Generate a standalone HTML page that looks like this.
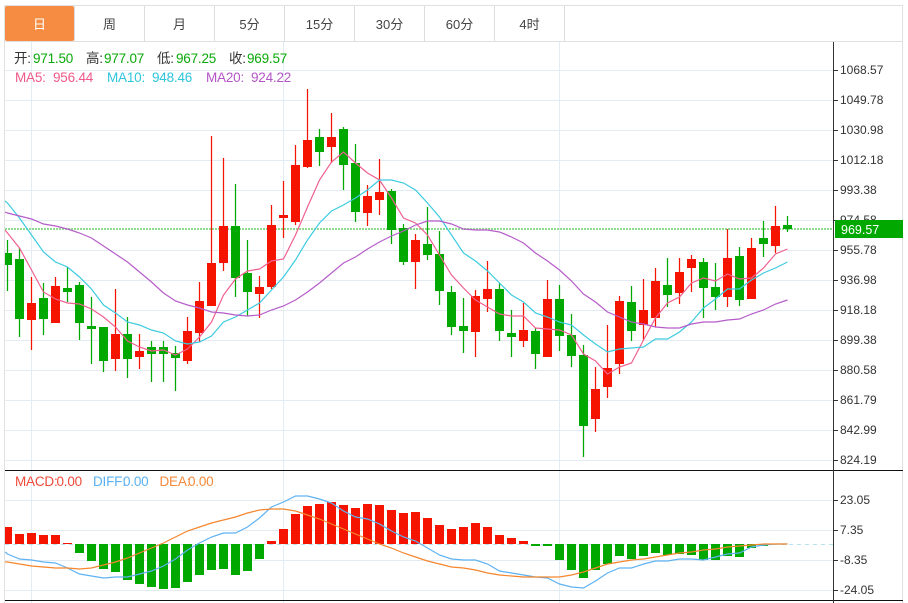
<!DOCTYPE html>
<html lang="zh">
<head>
<meta charset="utf-8">
<title>K线图</title>
<style>
html,body{margin:0;padding:0;background:#fff;width:908px;height:603px;overflow:hidden}
svg{display:block}
text{font-family:"Liberation Sans","Noto Sans CJK SC",sans-serif}
.tab{font-size:13px;fill:#444;text-anchor:middle}
.ax{font-size:12px;fill:#333}
.h{font-size:13.5px;letter-spacing:-.2px}
.k{fill:#333}
.g{fill:#0aa80a}
</style>
</head>
<body>
<svg width="908" height="603" viewBox="0 0 908 603" xmlns="http://www.w3.org/2000/svg">
<defs><clipPath id="c"><rect x="5" y="42" width="828" height="561"/></clipPath></defs>

<!-- grid -->
<path d="M5 70.5H833M5 100.5H833M5 130.5H833M5 160.5H833M5 190.5H833M5 220.5H833M5 250.5H833M5 280.5H833M5 310.5H833M5 340.5H833M5 370.5H833M5 400.5H833M5 430.5H833M5 460.5H833M5 500.5H833M5 530.5H833M5 560.5H833M5 590.5H833M31.5 42V603M283.5 42V603M559.5 42V603" stroke="#e3ecf3" stroke-width="1" fill="none"/>

<!-- frame -->
<path d="M4.5 5V603M902.5 5V603M4 5.5H903M5 41.5H903" stroke="#e0e0e0" stroke-width="1" fill="none"/>
<path d="M74.5 6V41M144.5 6V41M214.5 6V41M284.5 6V41M354.5 6V41M424.5 6V41M494.5 6V41M564.5 6V41" stroke="#dcdcdc" stroke-width="1" fill="none"/>
<rect x="5" y="6" width="69" height="35" rx="2" fill="#f58c41"/>

<!-- tabs -->
<text x="39.5" y="29" class="tab" style="fill:#fff">日</text>
<text x="109.5" y="29" class="tab">周</text>
<text x="179.5" y="29" class="tab">月</text>
<text x="249.5" y="29" class="tab">5分</text>
<text x="319.5" y="29" class="tab">15分</text>
<text x="389.5" y="29" class="tab">30分</text>
<text x="459.5" y="29" class="tab">60分</text>
<text x="529.5" y="29" class="tab">4时</text>

<g clip-path="url(#c)">
<!-- price line -->
<path d="M5 229H833" stroke="#8fdc8f" stroke-width="2" stroke-dasharray="2 1" fill="none"/>

<!-- candles -->
<g fill="none" stroke="#f51400" stroke-width="1.25">
<path d="M31.5 277V350M55.5 277V323M115.5 289V371M139.5 334V369M187.5 317V364M199.5 282V342M211.5 136V306M223.5 158V271M259.5 276V318M271.5 205V289M283.5 181V238M295.5 145V225M307.5 89V168M331.5 113V163M367.5 185V226M379.5 159V215M415.5 234V289M475.5 290V357M487.5 261V312M523.5 303V347M547.5 280V357M595.5 367V432M607.5 325V398M619.5 296V374M643.5 279V340M655.5 268V327M679.5 258V304M691.5 255V292M727.5 229V307M751.5 238V299M775.5 206V253"/>
</g>
<path fill="#f51400" d="M27 303h9v17h-9zM51 286h9v37h-9zM111 334h9v25h-9zM135 351h9v6h-9zM183 331h9v30h-9zM195 301h9v32h-9zM207 263h9v43h-9zM219 226h9v37h-9zM255 287h9v7h-9zM267 225h9v62h-9zM279 215h9v3h-9zM291 165h9v57h-9zM303 140h9v27h-9zM327 137h9v10h-9zM363 196h9v17h-9zM375 192h9v8h-9zM411 240h9v22h-9zM471 296h9v36h-9zM483 289h9v10h-9zM519 330h9v11h-9zM543 299h9v58h-9zM591 389h9v30h-9zM603 368h9v19h-9zM615 301h9v63h-9zM639 310h9v15h-9zM651 281h9v37h-9zM675 272h9v21h-9zM687 259h9v9h-9zM723 258h9v39h-9zM747 248h9v51h-9zM771 226h9v20h-9z"/>
<g fill="none" stroke="#00a800" stroke-width="1.25">
<path d="M7.5 240V291M19.5 248V337M43.5 283V335M67.5 267V302M79.5 282V340M91.5 297V364M103.5 327V372M127.5 317V378M151.5 341V382M163.5 341V382M175.5 346V391M235.5 184V297M247.5 240V316M319.5 129V166M343.5 127V190M355.5 144V222M391.5 189V244M403.5 224V265M427.5 207V260M439.5 231V305M451.5 286V335M463.5 298V353M499.5 283V341M511.5 310V357M535.5 328V369M559.5 285V351M571.5 314V367M583.5 345V457M631.5 286V341M667.5 258V307M703.5 258V318M715.5 263V310M739.5 247V306M763.5 221V257M787.5 216V232"/>
</g>
<path fill="#00a800" d="M3 253h9v12h-9zM15 259h9v60h-9zM39 298h9v21h-9zM63 288h9v4h-9zM75 285h9v38h-9zM87 326h9v3h-9zM99 327h9v34h-9zM123 334h9v25h-9zM147 347h9v7h-9zM159 347h9v7h-9zM171 353h9v5h-9zM231 226h9v52h-9zM243 273h9v19h-9zM315 137h9v15h-9zM339 129h9v36h-9zM351 163h9v49h-9zM387 191h9v39h-9zM399 228h9v34h-9zM423 244h9v11h-9zM435 254h9v37h-9zM447 292h9v35h-9zM459 326h9v5h-9zM495 289h9v42h-9zM507 333h9v4h-9zM531 331h9v23h-9zM555 299h9v37h-9zM567 335h9v21h-9zM579 355h9v71h-9zM627 302h9v29h-9zM663 285h9v10h-9zM699 262h9v26h-9zM711 287h9v10h-9zM735 256h9v44h-9zM759 238h9v6h-9zM783 225h9v4h-9z"/>

<!-- MA lines -->
<polyline fill="none" stroke="#f0608f" stroke-width="1.2" points="5,230 7.5,233 19.5,248 31.5,270 43.5,292 55.5,299 67.5,303 79.5,304 91.5,309 103.5,317 115.5,327 127.5,341 139.5,347 151.5,351 163.5,350 175.5,355 187.5,349 199.5,337 211.5,322 223.5,295 235.5,279 247.5,271 259.5,269 271.5,261 283.5,259 295.5,235 307.5,207 319.5,180 331.5,162 343.5,152 355.5,163 367.5,173 379.5,180 391.5,198 403.5,218 415.5,223 427.5,235 439.5,255 451.5,275 463.5,288 475.5,300 487.5,307 499.5,314 511.5,316 523.5,316 535.5,328 547.5,329 559.5,330 571.5,335 583.5,354 595.5,361 607.5,374 619.5,367 631.5,363 643.5,340 655.5,318 667.5,303 679.5,297 691.5,283 703.5,278 715.5,281 727.5,274 739.5,279 751.5,278 763.5,268 775.5,254 787.5,249"/>
<polyline fill="none" stroke="#3dcbe0" stroke-width="1.2" points="5,201 7.5,203 19.5,218 31.5,235 43.5,252 55.5,262 67.5,267 79.5,277 91.5,289 103.5,305 115.5,313 127.5,322 139.5,325 151.5,330 163.5,333 175.5,341 187.5,344 199.5,342 211.5,336 223.5,322 235.5,317 247.5,310 259.5,303 271.5,290 283.5,277 295.5,260 307.5,240 319.5,223 331.5,211 343.5,205 355.5,198 367.5,190 379.5,180 391.5,180 403.5,183 415.5,190 427.5,203 439.5,217 451.5,235 463.5,253 475.5,261 487.5,271 499.5,283 511.5,295 523.5,302 535.5,313 547.5,317 559.5,322 571.5,325 583.5,335 595.5,344 607.5,352 619.5,349 631.5,348 643.5,347 655.5,339 667.5,339 679.5,332 691.5,322 703.5,308 715.5,299 727.5,289 739.5,289 751.5,280 763.5,273 775.5,268 787.5,262"/>
<polyline fill="none" stroke="#b65cc9" stroke-width="1.2" points="5,212 7.5,213 19.5,216 31.5,219 43.5,224 55.5,226 67.5,229 79.5,233 91.5,238 103.5,246 115.5,254 127.5,262 139.5,272 151.5,282 163.5,293 175.5,301 187.5,305 199.5,308 211.5,312 223.5,313 235.5,315 247.5,316 259.5,315 271.5,310 283.5,306 295.5,300 307.5,292 319.5,283 331.5,273 343.5,263 355.5,257 367.5,249 379.5,242 391.5,236 403.5,231 415.5,225 427.5,221 439.5,221 451.5,224 463.5,229 475.5,230 487.5,230 499.5,232 511.5,237 523.5,243 535.5,253 547.5,261 559.5,270 571.5,281 583.5,294 595.5,302 607.5,312 619.5,317 631.5,322 643.5,324 655.5,327 667.5,328 679.5,328 691.5,324 703.5,322 715.5,322 727.5,320 739.5,319 751.5,314 763.5,310 775.5,304 787.5,300"/>

<!-- MACD -->
<path d="M5 544.5H833" stroke="#b9e2f0" stroke-width="1" stroke-dasharray="4 4" fill="none"/>
<path fill="#f51400" d="M3 527h9v17h-9zM15 534h9v10h-9zM27 533h9v11h-9zM39 535h9v9h-9zM51 535h9v9h-9zM63 543h9v1h-9zM267 541h9v3h-9zM279 529h9v15h-9zM291 514h9v30h-9zM303 506h9v38h-9zM315 504h9v40h-9zM327 502h9v42h-9zM339 505h9v39h-9zM351 508h9v36h-9zM363 504h9v40h-9zM375 505h9v39h-9zM387 510h9v34h-9zM399 513h9v31h-9zM411 512h9v32h-9zM423 518h9v26h-9zM435 525h9v19h-9zM447 529h9v15h-9zM459 527h9v17h-9zM471 523h9v21h-9zM483 527h9v17h-9zM495 535h9v9h-9zM507 538h9v6h-9zM519 541h9v3h-9z"/>
<path fill="#00a800" d="M75 544h9v9h-9zM87 544h9v17h-9zM99 544h9v25h-9zM111 544h9v28h-9zM123 544h9v36h-9zM135 544h9v40h-9zM147 544h9v43h-9zM159 544h9v45h-9zM171 544h9v44h-9zM183 544h9v38h-9zM195 544h9v31h-9zM207 544h9v26h-9zM219 544h9v25h-9zM231 544h9v31h-9zM243 544h9v27h-9zM255 544h9v15h-9zM531 544h9v2h-9zM543 544h9v2h-9zM555 544h9v16h-9zM567 544h9v26h-9zM579 544h9v34h-9zM591 544h9v26h-9zM603 544h9v20h-9zM615 544h9v12h-9zM627 544h9v15h-9zM639 544h9v12h-9zM651 544h9v9h-9zM663 544h9v11h-9zM675 544h9v10h-9zM687 544h9v11h-9zM699 544h9v16h-9zM711 544h9v16h-9zM723 544h9v12h-9zM735 544h9v13h-9zM747 544h9v4h-9zM759 544h9v2h-9z"/>
<polyline fill="none" stroke="#5fb2f2" stroke-width="1.2" points="5,552 7.5,554 19.5,559 31.5,560 43.5,562 55.5,563 67.5,568 79.5,574 91.5,576 103.5,578 115.5,577 127.5,577 139.5,574 151.5,571 163.5,566 175.5,559 187.5,550 199.5,543 211.5,537 223.5,533 235.5,533 247.5,527 259.5,518 271.5,507 283.5,502 295.5,496 307.5,496 319.5,499 331.5,503 343.5,511 355.5,517 367.5,519 379.5,524 391.5,531 403.5,537 415.5,541 427.5,548 439.5,555 451.5,559 463.5,560 475.5,560 487.5,564 499.5,571 511.5,573 523.5,575 535.5,577 547.5,578 559.5,584 571.5,587 583.5,588 595.5,581 607.5,573 619.5,568 631.5,568 643.5,564 655.5,561 667.5,561 679.5,559 691.5,559 703.5,560 715.5,557 727.5,554 739.5,553 751.5,547 763.5,545 775.5,544 787.5,544"/>
<polyline fill="none" stroke="#f5862e" stroke-width="1.2" points="5,562 7.5,562 19.5,564 31.5,566 43.5,567 55.5,568 67.5,568 79.5,569 91.5,568 103.5,565 115.5,562 127.5,558 139.5,553 151.5,548 163.5,543 175.5,537 187.5,531 199.5,527 211.5,523 223.5,520 235.5,517 247.5,513 259.5,510 271.5,509 283.5,509 295.5,511 307.5,515 319.5,519 331.5,524 343.5,529 355.5,534 367.5,539 379.5,544 391.5,548 403.5,553 415.5,557 427.5,561 439.5,564 451.5,567 463.5,568 475.5,570 487.5,573 499.5,575 511.5,576 523.5,577 535.5,577 547.5,577 559.5,577 571.5,575 583.5,572 595.5,568 607.5,564 619.5,562 631.5,560 643.5,559 655.5,557 667.5,555 679.5,553 691.5,552 703.5,550 715.5,549 727.5,547 739.5,546 751.5,545 763.5,544 775.5,544 787.5,544"/>
</g>

<!-- sub chart separators and axis -->
<path d="M5 470.5H903M5 600.5H903" stroke="#111" stroke-width="1" fill="none"/>
<path d="M833.5 42V603" stroke="#333" stroke-width="1" fill="none"/>
<path d="M833 70.5h5M833 100.5h5M833 130.5h5M833 160.5h5M833 190.5h5M833 220.5h5M833 250.5h5M833 280.5h5M833 310.5h5M833 340.5h5M833 370.5h5M833 400.5h5M833 430.5h5M833 460.5h5M833 500.5h5M833 530.5h5M833 560.5h5M833 590.5h5" stroke="#333" stroke-width="1" fill="none"/>

<!-- axis labels -->
<g class="ax">
<text x="840" y="74" class="ax">1068.57</text>
<text x="840" y="104" class="ax">1049.78</text>
<text x="840" y="134" class="ax">1030.98</text>
<text x="840" y="164" class="ax">1012.18</text>
<text x="840" y="194" class="ax">993.38</text>
<text x="840" y="224" class="ax">974.58</text>
<text x="840" y="254" class="ax">955.78</text>
<text x="840" y="284" class="ax">936.98</text>
<text x="840" y="314" class="ax">918.18</text>
<text x="840" y="344" class="ax">899.38</text>
<text x="840" y="374" class="ax">880.58</text>
<text x="840" y="404" class="ax">861.79</text>
<text x="840" y="434" class="ax">842.99</text>
<text x="840" y="464" class="ax">824.19</text>
<text x="840" y="504" class="ax">23.05</text>
<text x="840" y="534" class="ax">7.35</text>
<text x="840" y="564" class="ax">-8.35</text>
<text x="840" y="594" class="ax">-24.05</text>
</g>
<rect x="835" y="220" width="68" height="18" fill="#00a800"/>
<text x="841" y="234" style="font-size:12.5px;fill:#fff">969.57</text>

<!-- header -->
<text x="14" y="63" class="h k">开:</text><text x="33" y="63" class="h g">971.50</text>
<text x="86" y="63" class="h k">高:</text><text x="104" y="63" class="h g">977.07</text>
<text x="157" y="63" class="h k">低:</text><text x="176" y="63" class="h g">967.25</text>
<text x="229" y="63" class="h k">收:</text><text x="247" y="63" class="h g">969.57</text>
<text x="15" y="82" class="h" style="fill:#ef5a8a">MA5:</text><text x="53" y="82" class="h" style="fill:#ef5a8a">956.44</text>
<text x="107" y="82" class="h" style="fill:#2fc5dd">MA10:</text><text x="152" y="82" class="h" style="fill:#2fc5dd">948.46</text>
<text x="206" y="82" class="h" style="fill:#b455c7">MA20:</text><text x="251" y="82" class="h" style="fill:#b455c7">924.22</text>
<text x="15" y="486" class="h" style="fill:#ef4a3a">MACD:</text><text x="56.5" y="486" class="h" style="fill:#ef4a3a">0.00</text>
<text x="93" y="486" class="h" style="fill:#5ab0f0">DIFF:</text><text x="123" y="486" class="h" style="fill:#5ab0f0">0.00</text>
<text x="159.5" y="486" class="h" style="fill:#f58a3c">DEA:</text><text x="188" y="486" class="h" style="fill:#f58a3c">0.00</text>
</svg>
</body>
</html>
